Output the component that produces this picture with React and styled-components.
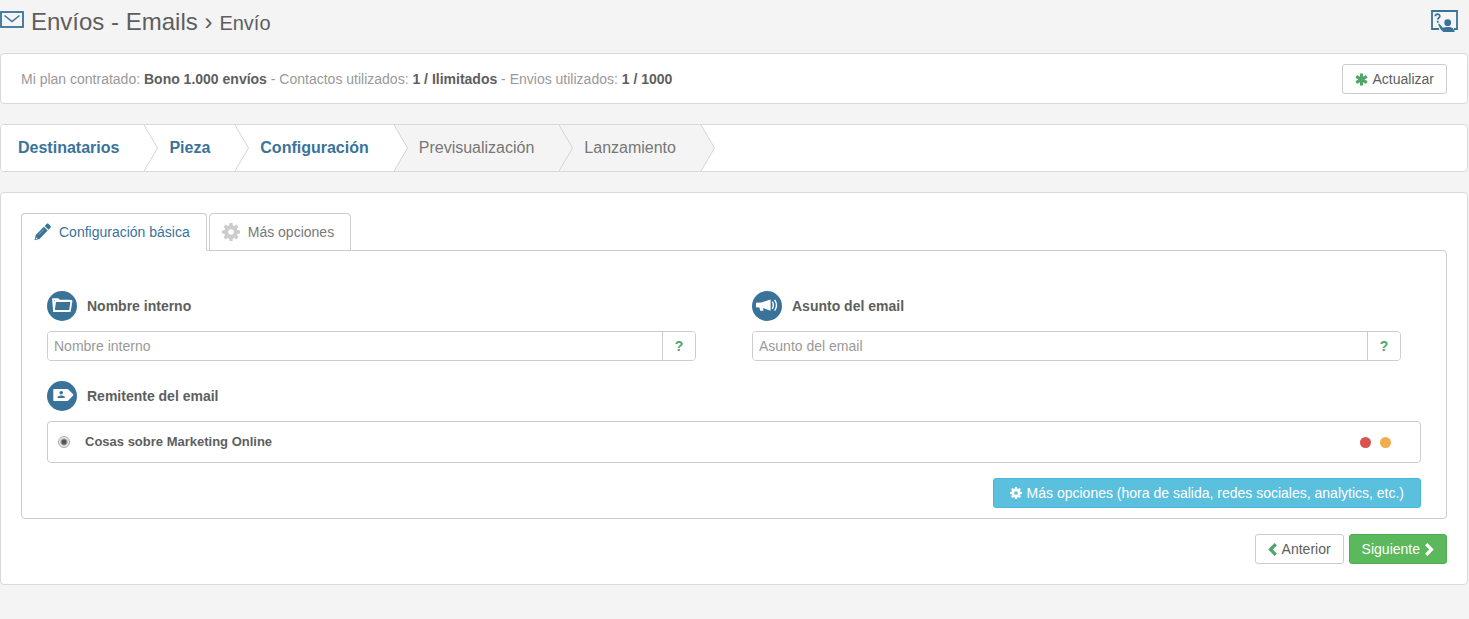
import React from 'react';
import styled, { createGlobalStyle } from 'styled-components';

const GlobalStyle = createGlobalStyle`
    * {
        box-sizing: border-box;
    }

    body {
        margin: 0;
        background: #f4f4f4;
        color: #5e5e5e;
        font-family: "Liberation Sans", Arial, sans-serif;
        font-size: 14px;
        line-height: 20px;
    }

    button, input {
        font-family: inherit;
    }
`

const Page = styled.div`
    display: flex;
    flex-direction: column;
    gap: 20px;
    padding: 0 1px 34px 0;
`

const Header = styled.header`
    display: flex;
    justify-content: space-between;
    align-items: flex-start;
    height: 33px;
    padding-right: 10px;
`

const Title = styled.h1`
    display: flex;
    align-items: baseline;
    gap: 7px;
    margin: 0;
    padding-top: 6px;
    font-size: 24px;
    line-height: 32px;
    font-weight: normal;
`

const TitleIcon = styled.svg`
    align-self: flex-start;
    margin-top: 5px;
`

const Section = styled.small`
    font-size: 20px;
`

const HelpButton = styled.button`
    margin-top: 9px;
    padding: 0;
    border: 0;
    background: none;
    line-height: 0;
    cursor: pointer;
`

const Panel = styled.section`
    background: #fff;
    border: 1px solid #d9d9d9;
    border-radius: 4px;
`

const PlanBar = styled(Panel)`
    display: flex;
    justify-content: space-between;
    align-items: center;
    padding: 10px 20px 9px;
`

const PlanText = styled.p`
    margin: 0;
    color: #999;

    strong {
        color: #5e5e5e;
    }
`

const variants = {
    plain: { bg: '#fff', border: '#ccc', color: '#5e5e5e', padding: '12px' },
    info: { bg: '#5bc0de', border: '#46b8da', color: '#fff', padding: '16px' },
    success: { bg: '#5cb85c', border: '#4cae4c', color: '#fff', padding: '12px' },
}

const Button = styled.button`
    display: flex;
    align-items: center;
    gap: 5px;
    height: 30px;
    padding: 0 ${p => variants[p.$kind].padding};
    border: 1px solid ${p => variants[p.$kind].border};
    border-radius: 3px;
    background: ${p => variants[p.$kind].bg};
    color: ${p => variants[p.$kind].color};
    font-size: 14px;
    white-space: nowrap;
    cursor: pointer;
`

const Steps = styled(Panel).attrs({ as: 'ol' })`
    display: flex;
    margin: 0;
    padding: 0;
    list-style: none;
    overflow: hidden;
`

const Step = styled.li`
    position: relative;
    height: 46px;
    padding: 0 25px;
    background: ${p => p.$done ? '#fff' : '#f4f4f4'};
    color: ${p => p.$done ? '#39739a' : '#777'};
    font-size: 16px;
    font-weight: ${p => p.$done ? 'bold' : 'normal'};
    line-height: 46px;

    &:first-child {
        padding-left: 17px;
    }
`

const Arrow = styled.svg`
    position: absolute;
    z-index: 1;
    top: 0;
    left: 100%;
    fill: ${p => p.$done ? '#fff' : '#f4f4f4'};
    stroke: #d4d4d4;
`

const Main = styled(Panel)`
    padding: 20px;
`

const Tabs = styled.div`
    display: flex;
    gap: 2px;
`

const Tab = styled.button`
    display: flex;
    align-items: center;
    gap: 8px;
    height: 38px;
    margin-bottom: -1px;
    padding: 0 16px 0 12px;
    border: 1px solid #ccc;
    border-bottom-color: ${p => p.$active ? '#fff' : '#ccc'};
    border-radius: 4px 4px 0 0;
    background: #fff;
    color: ${p => p.$active ? '#39739a' : '#777'};
    font-size: 14px;
    position: relative;
    cursor: pointer;
`

const TabContent = styled.div`
    padding: 40px 25px 10px;
    border: 1px solid #ccc;
    border-radius: 0 4px 4px 4px;
`

const Fields = styled.div`
    display: grid;
    grid-template-columns: 1fr 1fr;
    gap: 56px;
    padding-right: 20px;
    margin-bottom: 20px;
`

const FieldLabel = styled.label`
    display: flex;
    align-items: center;
    gap: 10px;
    height: 30px;
    margin-bottom: 10px;
    font-weight: bold;
`

const InputGroup = styled.div`
    display: flex;
    height: 30px;
    border: 1px solid #ccc;
    border-radius: 4px;
    overflow: hidden;
`

const TextInput = styled.input`
    flex: 1;
    min-width: 0;
    padding: 0 6px;
    border: 0;
    outline: 0;
    background: #fff;
    color: #5e5e5e;
    font-size: 14px;

    &::placeholder {
        color: #999;
        opacity: 1;
    }
`

const HintButton = styled.button`
    width: 33px;
    padding: 0;
    border: 0;
    border-left: 1px solid #ccc;
    background: #fff;
    color: #4ea66b;
    font-size: 14px;
    font-weight: bold;
    cursor: pointer;
`

const SenderRow = styled.div`
    display: flex;
    align-items: center;
    height: 42px;
    padding: 0 29px 0 10px;
    border: 1px solid #ccc;
    border-radius: 4px;
`

const SenderLabel = styled.label`
    flex: 1;
    display: flex;
    align-items: center;
    gap: 15px;
    font-size: 13px;
    font-weight: bold;
`

const Radio = styled.input`
    appearance: none;
    width: 12px;
    height: 12px;
    margin: 0;
    border: 1px solid #aaa;
    border-radius: 50%;
    background: radial-gradient(circle, #555 0 2px, #e8e8e8 4px);
`

const Status = styled.span`
    width: 11px;
    height: 11px;
    margin-left: 9px;
    border-radius: 50%;
    background: ${p => p.$color};
`

const Actions = styled.div`
    display: flex;
    justify-content: flex-end;
    gap: 5px;
    margin-top: 15px;
`

function MailIcon() {
    return (
        <TitleIcon width="24" height="17" viewBox="0 0 24 17" fill="none" stroke="#39739a">
            <rect x="1" y="1" width="22" height="15" strokeWidth="1.8" />
            <path d="M4.5 4.5l7.5 6 7.5-6" strokeWidth="1.5" />
        </TitleIcon>
    )
}

function TrainerIcon() {
    return (
        <svg width="28" height="24" viewBox="0 0 28 24">
            <path d="M9 20H2V2h25v18h-3" fill="none" stroke="#39739a" strokeWidth="1.8" />
            <path d="M5.4 7.2c0-2.7 4.4-2.7 4.4 0 0 1.7-2 1.6-2 3.2M7.8 11.8v2" fill="none" stroke="#39739a" strokeWidth="1.8" />
            <circle cx="17.7" cy="13.7" r="3.4" fill="#39739a" />
            <path d="M9.2 14.6l3.6 4.2c2.6-.7 3.7-1 4.9-.7 3-.2 6.400.6 7 4.900H13.400c-2.600-1.700-4-4.600-5.200-8z" fill="#39739a" />
        </svg>
    )
}

function AsteriskIcon() {
    return (
        <svg width="13" height="13" viewBox="0 0 13 13" stroke="#4ea66b" strokeWidth="3">
            <path d="M6.5 .5v12M1.2 3.4l10.6 6.2M1.2 9.6l10.6-6.2" />
        </svg>
    )
}

function PencilIcon() {
    return (
        <svg width="17" height="18" viewBox="0 0 17 18" fill="#39739a">
            <path d="M10.7 2.9l1.900-1.900c.6-.6 1.400-.6 2 0l1.800 1.800c.6.6.6 1.400 0 2l-1.900 1.900z" />
            <path d="M9.900 3.700l3.800 3.800-8.200 8.500L.5 17.300l1.200-5.200z" />
            <path d="M4.800 11.600l5.200-5.200" stroke="#a9c4d6" strokeWidth=".7" />
            <path d="M1.900 14.200l1.800 1.700-1.900.3z" fill="#fff" />
        </svg>
    )
}

function CogIcon({ size, color }) {
    const angles = [0, 45, 90, 135, 180, 225, 270, 315]
    return (
        <svg width={size} height={size} viewBox="0 0 18 18">
            <circle cx="9" cy="9" r="4.8" fill="none" stroke={color} strokeWidth="4" />
            {angles.map(a => (
                <path key={a} d="M7 3l.5-3h3l.5 3z" fill={color} transform={`rotate(${a} 9 9)`} />
            ))}
        </svg>
    )
}

function ChevronIcon({ right, color }) {
    return (
        <svg width="9" height="13" viewBox="0 0 9 13" fill="none" stroke={color} strokeWidth="3.2">
            <path d={right ? 'M1.2 1.2l5.3 5.3-5.3 5.3' : 'M7.8 1.2L2.5 6.5l5.3 5.3'} />
        </svg>
    )
}

function Badge({ children }) {
    return (
        <svg width="30" height="30" viewBox="0 0 30 30">
            <circle cx="15" cy="15" r="15" fill="#39739a" />
            {children}
        </svg>
    )
}

function FolderIcon() {
    return (
        <Badge>
            <path d="M7 19.5L6 8.2h5.200l1.200 1.500H22.500" fill="none" stroke="#fff" strokeWidth="1.800" strokeLinejoin="round" />
            <path d="M8.200 10H24.500l-1.600 10H6.800z" fill="none" stroke="#fff" strokeWidth="1.800" strokeLinejoin="round" />
        </Badge>
    )
}

function MegaphoneIcon() {
    return (
        <Badge>
            <path d="M4 11.8l5-.2 9.600-3.100v11.300l-7.600-2.700.5 2.700H8.200l-.8-3.200L4 16.200z" fill="#fff" />
            <path d="M20.200 10.600c1.400 2.200 1.400 5 0 7.200M22.600 8.800c2.300 3.200 2.300 7.600 0 10.800" fill="none" stroke="#fff" strokeWidth="1.4" />
        </Badge>
    )
}

function SenderIcon() {
    return (
        <Badge>
            <path d="M7 8h13.200c.5 0 .8.2 1.100.5l4.600 4.600c.6.6.6 1.100 0 1.700l-4.600 4.600c-.3.3-.6.5-1.100.5H7c-.4 0-.7-.3-.7-.7V8.700c0-.4.3-.7.7-.7z" fill="#fff" />
            <circle cx="14.2" cy="11.8" r="1.8" fill="#39739a" />
            <path d="M10.600 17v-1.200l2.600-1.300h2l2.600 1.300V17z" fill="#39739a" />
        </Badge>
    )
}

const steps = [
    { name: 'Destinatarios', done: true },
    { name: 'Pieza', done: true },
    { name: 'Configuración', done: true },
    { name: 'Previsualización', done: false },
    { name: 'Lanzamiento', done: false },
]

function Field({ id, label, icon }) {
    return (
        <div>
            <FieldLabel htmlFor={id}>{icon}{label}</FieldLabel>
            <InputGroup>
                <TextInput id={id} type="text" placeholder={label} />
                <HintButton type="button">?</HintButton>
            </InputGroup>
        </div>
    )
}

export default function App() {
    return (
        <>
            <GlobalStyle />
            <Page>
                <Header>
                    <Title>
                        <MailIcon />
                        <span>Envíos - Emails ›</span>
                        <Section>Envío</Section>
                    </Title>
                    <HelpButton type="button"><TrainerIcon /></HelpButton>
                </Header>

                <PlanBar>
                    <PlanText>
                        Mi plan contratado: <strong>Bono 1.000 envíos</strong> - Contactos utilizados: <strong>1 / Ilimitados</strong> - Envios utilizados: <strong>1 / 1000</strong>
                    </PlanText>
                    <Button type="button" $kind="plain"><AsteriskIcon />Actualizar</Button>
                </PlanBar>

                <Steps>
                    {steps.map(step => (
                        <Step key={step.name} $done={step.done}>
                            {step.name}
                            <Arrow $done={step.done} width="15" height="46" viewBox="0 0 15 46">
                                <path d="M0 0l13.5 23L0 46" />
                            </Arrow>
                        </Step>
                    ))}
                </Steps>

                <Main>
                    <Tabs>
                        <Tab type="button" $active><PencilIcon />Configuración básica</Tab>
                        <Tab type="button"><CogIcon size={18} color="#ccc" />Más opciones</Tab>
                    </Tabs>
                    <TabContent>
                        <Fields>
                            <Field id="nombre" label="Nombre interno" icon={<FolderIcon />} />
                            <Field id="asunto" label="Asunto del email" icon={<MegaphoneIcon />} />
                        </Fields>
                        <FieldLabel htmlFor="remitente"><SenderIcon />Remitente del email</FieldLabel>
                        <SenderRow>
                            <SenderLabel>
                                <Radio id="remitente" type="radio" name="remitente" defaultChecked />
                                Cosas sobre Marketing Online
                            </SenderLabel>
                            <Status $color="#d9534f" />
                            <Status $color="#f0ad4e" />
                        </SenderRow>
                        <Actions>
                            <Button type="button" $kind="info">
                                <CogIcon size={12} color="#fff" />
                                Más opciones (hora de salida, redes sociales, analytics, etc.)
                            </Button>
                        </Actions>
                    </TabContent>
                    <Actions>
                        <Button type="button" $kind="plain"><ChevronIcon color="#4ea66b" />Anterior</Button>
                        <Button type="button" $kind="success">Siguiente<ChevronIcon right color="#fff" /></Button>
                    </Actions>
                </Main>
            </Page>
        </>
    )
}
